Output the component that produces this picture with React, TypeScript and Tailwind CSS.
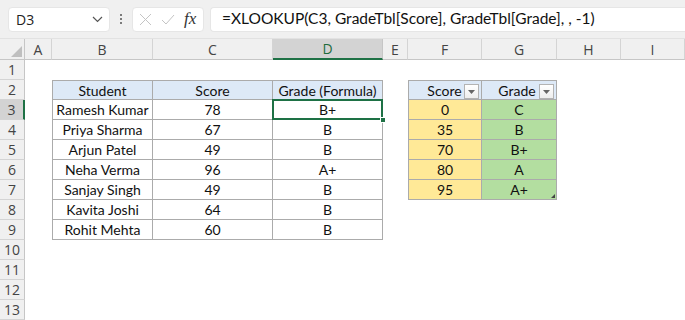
import React from "react";

const cols = ["A", "B", "C", "D", "E", "F", "G", "H", "I"];

const alumnos = [
  ["Ramesh Kumar", "78", "B+"],
  ["Priya Sharma", "67", "B"],
  ["Arjun Patel", "49", "B"],
  ["Neha Verma", "96", "A+"],
  ["Sanjay Singh", "49", "B"],
  ["Kavita Joshi", "64", "B"],
  ["Rohit Mehta", "60", "B"],
];

const notas = [
  ["0", "C"],
  ["35", "B"],
  ["70", "B+"],
  ["80", "A"],
  ["95", "A+"],
];

const cellFont = { fontFamily: "Lato, 'Liberation Sans', sans-serif" };

function FilterBtn() {
  return (
    <div className="absolute right-[2px] top-[3px] w-[15px] h-[15px] border border-[#b3b3b3] bg-gradient-to-b from-white to-[#eeeeee] flex items-center justify-center">
      <svg width="7" height="4" viewBox="0 0 7 4">
        <path d="M0 0 L7 0 L3.5 4 Z" fill="#666" />
      </svg>
    </div>
  );
}

function Cell({ row, col }: { row: number; col: string }) {
  // ── Tabla de alumnos (B2:D9) ───────────────────────────────────────────
  if (row >= 2 && row <= 9 && (col === "B" || col === "C" || col === "D")) {
    const head = row === 2;
    const idx = col === "B" ? 0 : col === "C" ? 1 : 2;
    const text = head
      ? ["Student", "Score", "Grade (Formula)"][idx]
      : alumnos[row - 3][idx];
    const active = row === 3 && col === "D";
    return (
      <div
        className={
          "relative flex items-center justify-center border-b border-r border-[#ababab] text-[14px] text-[#111] " +
          (col === "B" ? "border-l " : "") +
          (head ? "border-t bg-[#dde9f7]" : "bg-white")
        }
        style={cellFont}
      >
        {text}
        {active && (
          <>
            <div className="absolute -left-px -top-px -right-px -bottom-px border-2 border-[#1e7145]" />
            <div className="absolute -right-[4px] -bottom-[4px] w-[6px] h-[6px] bg-[#1e7145] border border-white z-10" />
          </>
        )}
      </div>
    );
  }

  // ── Tabla GradeTbl (F2:G7) ─────────────────────────────────────────────
  if (row >= 2 && row <= 7 && (col === "F" || col === "G")) {
    const head = row === 2;
    const isF = col === "F";
    const text = head ? (isF ? "Score" : "Grade") : notas[row - 3][isF ? 0 : 1];
    const bg = head ? "bg-[#dde9f7]" : isF ? "bg-[#ffe997]" : "bg-[#b3dea0]";
    return (
      <div
        className={
          "relative flex items-center justify-center border-b border-r border-[#ababab] text-[14px] text-[#111] " +
          bg +
          (isF ? " border-l" : "") +
          (head ? " border-t" : "")
        }
        style={cellFont}
      >
        <span className={head ? (isF ? "-ml-[1px]" : "-ml-[4px]") : ""}>{text}</span>
        {head && <FilterBtn />}
        {row === 7 && !isF && (
          <svg className="absolute right-[1px] bottom-[1px]" width="4" height="4" viewBox="0 0 4 4">
            <path d="M4 0 L4 4 L0 4 Z" fill="#444" />
          </svg>
        )}
      </div>
    );
  }

  return <div className="bg-white" />;
}

export default function App() {
  const rows = Array.from({ length: 13 }, (_, i) => i + 1);
  const ui = { fontFamily: "'Open Sans', 'Noto Sans', sans-serif" };

  return (
    <div className="w-[685px] h-[320px] overflow-hidden bg-white">
      {/* Barra de fórmulas */}
      <div className="h-[39px] bg-[#f0f0f0] flex items-center border-b border-[#e2e2e2]">
        <div
          className="ml-[8px] w-[102px] h-[25px] bg-white rounded-[4px] border border-[#e6e6e6] flex items-center justify-between pl-[7px] pr-[6px] text-[14px] text-[#222]"
          style={ui}
        >
          <span>D3</span>
          <svg width="11" height="7" viewBox="0 0 11 7">
            <path d="M1 1 L5.5 5.5 L10 1" fill="none" stroke="#555" strokeWidth="1.2" />
          </svg>
        </div>
        <div className="w-[22px] flex flex-col items-center gap-[2px]">
          <span className="w-[2px] h-[2px] bg-[#555] rounded-full" />
          <span className="w-[2px] h-[2px] bg-[#555] rounded-full" />
          <span className="w-[2px] h-[2px] bg-[#555] rounded-full" />
        </div>
        <div className="w-[72px] h-[25px] bg-white rounded-[4px] border border-[#e6e6e6] flex items-center pl-[6px] gap-[9px]">
          <svg width="13" height="13" viewBox="0 0 13 13">
            <path d="M1 1 L12 12 M12 1 L1 12" stroke="#c4c4c4" strokeWidth="1" />
          </svg>
          <svg width="14" height="11" viewBox="0 0 14 11">
            <path d="M1 6 L5 10 L13 1" fill="none" stroke="#c4c4c4" strokeWidth="1" />
          </svg>
          <span
            className="italic text-[17px] text-[#333] leading-none -mt-[2px]"
            style={{ fontFamily: "'Liberation Serif', serif" }}
          >
            fx
          </span>
        </div>
        <div
          className="ml-[6px] flex-1 h-[25px] bg-white rounded-l-[4px] border border-r-0 border-[#e6e6e6] flex items-center pl-[11px] text-[15.5px] text-[#111]"
          style={cellFont}
        >
          =XLOOKUP(C3, GradeTbl[Score], GradeTbl[Grade], , -1)
        </div>
      </div>

      {/* Hoja */}
      <div className="grid grid-cols-[25px_27px_101px_120px_110px_25px_74px_75px_64px_1fr] grid-rows-[21px_repeat(13,20px)]">
        <div className="relative bg-[#f0f0f0] border-r border-b border-[#c6c6c6]">
          <svg className="absolute right-[2px] bottom-[2px]" width="11" height="11" viewBox="0 0 11 11">
            <path d="M11 0 L11 11 L0 11 Z" fill="#bfbfbf" />
          </svg>
        </div>
        {cols.map((c) =>
          c === "D" ? (
            <div
              key={c}
              className="flex items-center justify-center bg-[#d3d3d3] border-r border-[#c6c6c6] border-b-2 border-b-[#1e7145] text-[14px] text-[#1e6b3c]"
              style={ui}
            >
              {c}
            </div>
          ) : (
            <div
              key={c}
              className="flex items-center justify-center bg-[#f0f0f0] border-r border-b border-[#d4d4d4] border-b-[#c6c6c6] text-[14px] text-[#444]"
              style={ui}
            >
              {c}
            </div>
          )
        )}
        {rows.map((r) => (
          <React.Fragment key={r}>
            {r === 3 ? (
              <div
                className="flex items-center justify-center bg-[#d3d3d3] border-b border-[#d4d4d4] border-r-2 border-r-[#1e7145] text-[14px] text-[#444]"
                style={ui}
              >
                {r}
              </div>
            ) : (
              <div
                className="flex items-center justify-center bg-[#f0f0f0] border-b border-[#d4d4d4] border-r border-r-[#c6c6c6] text-[14px] text-[#444]"
                style={ui}
              >
                {r}
              </div>
            )}
            {cols.map((c) => (
              <Cell key={c} row={r} col={c} />
            ))}
          </React.Fragment>
        ))}
      </div>
    </div>
  );
}
